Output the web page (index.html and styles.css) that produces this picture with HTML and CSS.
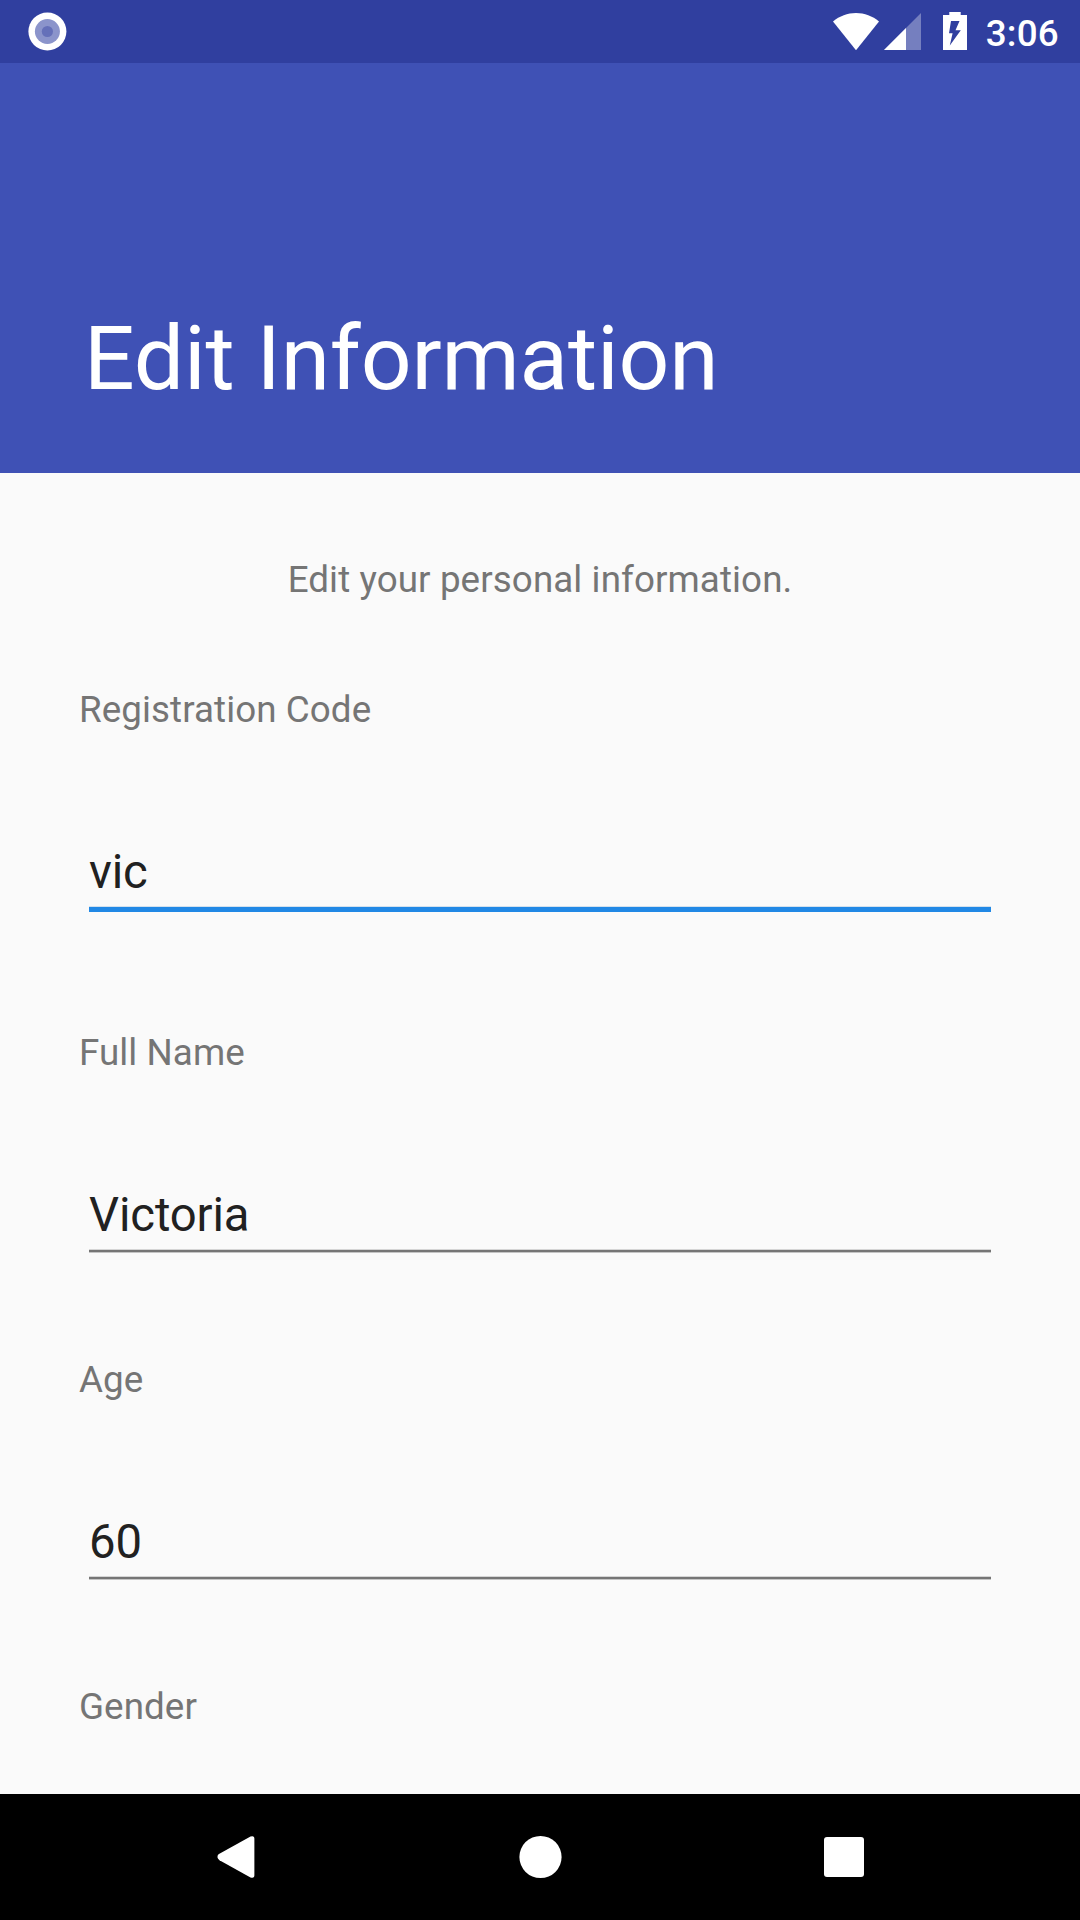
FILE: index.html
```html
<!DOCTYPE html>
<html lang="en">
<head>
<meta charset="utf-8">
<title>Edit Information</title>
<link rel="stylesheet" href="styles.css">
</head>
<body>
<div class="screen">
  <div class="status-bar">
    <svg class="notification" width="40" height="40" viewBox="0 0 40 40">
      <circle cx="20.400" cy="19.500" r="19" fill="#fff"/>
      <circle cx="20.400" cy="19.500" r="12.500" fill="#8b94cb"/>
      <circle cx="20.400" cy="19.500" r="5.600" fill="#6570b9"/>
    </svg>
    <div class="indicators">
      <svg class="wifi" width="46" height="38" viewBox="0 0 46 38">
        <path d="M0 8.500C6.500 3 14.500 0 23 0s16.500 3 23 8.500L23 37.300z" fill="#fff"/>
      </svg>
      <svg class="signal" width="37" height="38" viewBox="0 0 37 38">
        <path d="M0 37L37 0v37z" fill="#757fbf"/>
        <path d="M0 37L22 15v22z" fill="#fff"/>
      </svg>
      <svg class="battery" width="24" height="38" viewBox="0 0 24 38">
        <path d="M6.300 0h11.400v3H24v35H0V3h6.300z" fill="#fff"/>
        <path d="M8 9h8.500l-4 9.200h5.300L6.800 33.500l2.800-12.300H6z" fill="#303f9f"/>
      </svg>
      <span class="clock">3:06</span>
    </div>
  </div>
  <header class="header">
    <h1 class="title">Edit Information</h1>
  </header>
  <main class="content">
    <p class="subtitle">Edit your personal information.</p>
    <div class="field focused">
      <span class="label">Registration Code</span>
      <div class="input">vic</div>
    </div>
    <div class="field">
      <span class="label">Full Name</span>
      <div class="input">Victoria</div>
    </div>
    <div class="field">
      <span class="label">Age</span>
      <div class="input">60</div>
    </div>
    <div class="field">
      <span class="label">Gender</span>
    </div>
  </main>
  <nav class="nav-bar">
    <svg width="44" height="44" viewBox="0 0 44 44">
      <path d="M3.500 19.200L35.500 1.600Q39.400 .200 39.400 4v36q0 3.800-3.900 2.400L4.500 25.300Q.900 22 3.500 19.200z" fill="#fff"/>
    </svg>
    <svg width="44" height="44" viewBox="0 0 44 44">
      <circle cx="21.500" cy="22" r="21.100" fill="#fff"/>
    </svg>
    <svg width="44" height="44" viewBox="0 0 44 44">
      <rect x="2" y="2" width="40" height="40" rx="3" fill="#fff"/>
    </svg>
  </nav>
</div>
</body>
</html>
```

FILE: styles.css
```css
* {
  box-sizing: border-box;
}

body {
  margin: 0;
  font-family: Roboto, sans-serif;
}

svg {
  display: block;
  flex: none;
}

.screen {
  display: flex;
  flex-direction: column;
  width: 1080px;
  height: 1920px;
  overflow: hidden;
  background: #fafafa;
}

.status-bar {
  display: flex;
  flex: none;
  justify-content: space-between;
  height: 63px;
  padding: 12px 21px 0 27px;
  background: #303f9f;
}

.indicators {
  display: flex;
  align-items: flex-start;
}

.wifi {
  margin: 1px 5px 0 0;
}

.signal {
  margin: 1px 22px 0 0;
}

.battery {
  margin-right: 19px;
}

.clock {
  color: #fff;
  font-size: 36.75px;
  font-weight: 500;
  letter-spacing: 0.25px;
  line-height: 43px;
}

.header {
  display: flex;
  flex: none;
  align-items: flex-end;
  height: 410px;
  padding: 0 84px 62px;
  background: #3f51b5;
}

.title {
  margin: 0;
  color: #fff;
  font-size: 89.25px;
  font-weight: 400;
  letter-spacing: -0.15px;
  line-height: 105px;
}

.content {
  flex: 1;
  min-height: 0;
  padding: 85px 79px 0;
  overflow: hidden;
}

.subtitle {
  margin: 0 0 87px;
  color: #757575;
  font-size: 36.75px;
  letter-spacing: 0.1px;
  line-height: 43px;
  text-align: center;
}

.field {
  height: 327px;
}

.focused {
  height: 343px;
}

.label {
  display: block;
  color: #757575;
  font-size: 36.75px;
  letter-spacing: 0.08px;
  line-height: 43px;
}

.input {
  height: 66px;
  margin: 113px 10px 0;
  color: #212121;
  font-size: 47.25px;
  letter-spacing: -0.13px;
  line-height: 56px;
  background: linear-gradient(#d5d5d5 1px, #757575 1px 3px, #c4c4c4 3px) 0 62px / 100% 4px no-repeat;
}

.focused .input {
  height: 68px;
  background: linear-gradient(#d3e1ed 1px, #2188e5 1px) 0 62px / 100% 6px no-repeat;
}

.nav-bar {
  display: flex;
  flex: none;
  align-items: flex-start;
  justify-content: space-between;
  height: 126px;
  padding: 41px 214px 0 215px;
  background: #000;
}
```
